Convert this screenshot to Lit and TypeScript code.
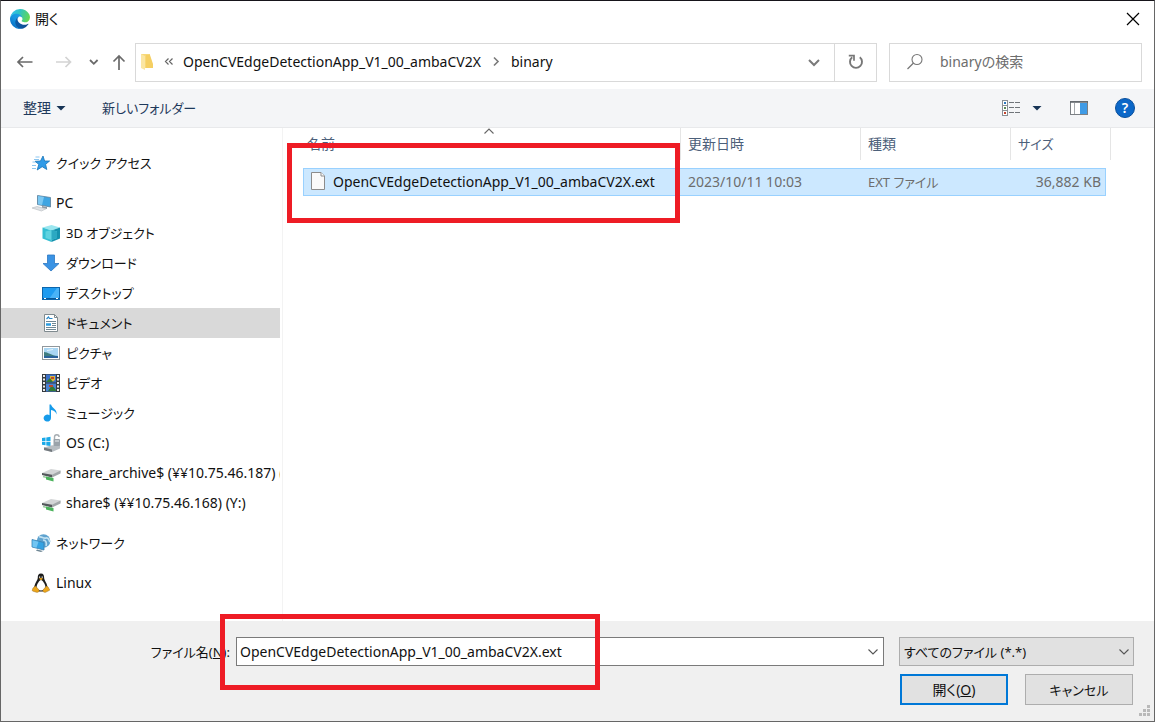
import { LitElement, html, css, svg, nothing } from "lit";
import { customElement, property } from "lit/decorators.js";

type NavItem = { icon: string; label: string; ja?: boolean; child?: boolean; selected?: boolean };

const groups: NavItem[][] = [
  [{ icon: "star", label: "クイック アクセス", ja: true }],
  [
    { icon: "pc", label: "PC" },
    { icon: "cube", label: "3D オブジェクト", ja: true, child: true },
    { icon: "download", label: "ダウンロード", ja: true, child: true },
    { icon: "desktop", label: "デスクトップ", ja: true, child: true },
    { icon: "document", label: "ドキュメント", ja: true, child: true, selected: true },
    { icon: "picture", label: "ピクチャ", ja: true, child: true },
    { icon: "video", label: "ビデオ", ja: true, child: true },
    { icon: "music", label: "ミュージック", ja: true, child: true },
    { icon: "disk", label: "OS (C:)", child: true },
    { icon: "share", label: "share_archive$ (¥¥10.75.46.187) (", child: true },
    { icon: "share", label: "share$ (¥¥10.75.46.168) (Y:)", child: true },
  ],
  [{ icon: "network", label: "ネットワーク", ja: true }],
  [{ icon: "linux", label: "Linux" }],
];

const glyphs: Record<string, unknown> = {
  star: svg`
    <path d="M12 3l1.600 5h5l-4 3.300 1.200 5.200-4.600-2.800-5 3.300 1.600-5.700L4 8.300l5.500-.3z" fill="#2f9be8" stroke="#1673b8" stroke-width=".8"/>
    <path d="M3 6.500h5M1.500 9h3M1 12.500h4M1 15.500h4M4.500 4h4" stroke="#7fc0ee" stroke-width=".9"/>`,
  pc: svg`
    <path d="M6.500 2.500l13 2v9.500l-13-2.500z" fill="#3fa5e2" stroke="#5b7f9a" stroke-width=".8"/>
    <path d="M7 3.100l6 1-2 8-4-.8z" fill="#7cc8f2"/>
    <path d="M11 13l5 1v2l-5-1z" fill="#8d99a3"/>
    <path d="M1 15l5-1.500 9 2.300-4.500 2.200z" fill="#dfe2e5" stroke="#b4b9be" stroke-width=".6"/>`,
  cube: svg`
    <path d="M1.500 4.500l9-2.500 8.500 2.500-8.500 3z" fill="#9be6ef"/>
    <path d="M1.500 4.500l9 3V19l-9-3.500z" fill="#35bfd3"/>
    <path d="M19 4.500l-8.500 3V19l8.500-3.500z" fill="#1592ae"/>
    <path d="M4.500 8.500l6-1.500 5.500 1.500v6.500L10.500 17l-6-2z" fill="#5fd3e0"/>
    <path d="M10.500 7l5.500 1.500v6.500L10.500 17z" fill="#2ba9c2"/>`,
  download: svg`<path d="M6.500 2h7v8.500H18L10 18 2 10.500h4.500z" fill="#3a93e4" stroke="#2c77c2" stroke-width=".8"/>`,
  desktop: svg`
    <rect x="1.500" y="4.500" width="17" height="12" fill="#1e9bf0" stroke="#0c66ad"/>
    <path d="M8 16L16 5h2v11z" fill="#4ab3f7"/><path d="M2 15.500h16" stroke="#0c5796"/>
    <path d="M3 15.500h2M15 15.500h2" stroke="#fff"/>`,
  document: svg`
    <path d="M3.500 1.500h10l3 3v14h-13z" fill="#fff" stroke="#7f8a8f"/>
    <path d="M13.500 1.500v3h3" fill="none" stroke="#7f8a8f"/>
    <path d="M5.500 6l2-2 1 1.500h3" fill="none" stroke="#2b8acb" stroke-width="1.200"/>
    <path d="M5 8.500h10M11 10.500h4M11 12.500h4M5 14.500h10M5 16.500h10" stroke="#6f8794"/>
    <path d="M5 11.500h5" stroke="#2b9ce0" stroke-width="2.500"/>`,
  picture: svg`
    <rect x="1.500" y="3.500" width="17" height="13" fill="#fff" stroke="#90979c"/>
    <rect x="3" y="5" width="14" height="10" fill="#a9d6f3"/>
    <path d="M3 9c4 0 7 3.500 14 4v2H3z" fill="#3f7d80"/><path d="M3 13l14 0v2H3z" fill="#2a639c"/>
    <path d="M6 7.500l6-1" stroke="#e6f4fc"/>`,
  video: svg`
    <rect x="1" y="1" width="18" height="18" fill="#353b3f"/>
    <rect x="5" y="1.500" width="10" height="8" fill="#3a70c8"/><rect x="5" y="10.500" width="10" height="8" fill="#4a83d4"/>
    <path d="M9 3h5v4l-3 2-2-2z" fill="#d9b53a"/><path d="M5 9l4-4 3 4zM7 18l4-6 4 5v1z" fill="#317a38"/>
    <path d="M10 5h3M8 13h4" stroke="#bd4a2a" stroke-width="2"/>
    <path d="M3 2v17M17 2v17" stroke="#fff" stroke-width="1.800" stroke-dasharray="2 1.500"/>`,
  music: svg`
    <path d="M8.500 1.500h1.500c1 4 6.500 4.500 5.500 10-.5-2.500-2.500-4-5.500-4.500V15a3.700 3.500 0 1 1-1.500-2.700z" fill="#169bea"/>`,
  disk: svg`
    <path d="M1 5l3.500-.5v3.500H1zM5.300 4.400L9.500 3.800v4.200H5.300zM1 8.800h3.500v3.500L1 11.800zM5.300 8.800h4.200v4.200l-4.200-.6z" fill="#1ba9e8"/>
    <path d="M3 14.500l7-2 9-1v4l-8 3.500-8-2z" fill="#b7bdc2"/><path d="M3 14.500l8 2V19l-8-2z" fill="#73797e"/>
    <path d="M13.500 7V4a2.300 2.300 0 0 1 4.600 0" fill="none" stroke="#a7adb2" stroke-width="1.400"/>
    <rect x="12.500" y="6" width="6.500" height="7" rx="1" fill="#9aa3aa"/><path d="M14 8h4" stroke="#e8ecef"/>`,
  share: svg`
    <path d="M1 10l9-4 9.500 1.500v2L11 13.500 1 12z" fill="#d3d5d6"/>
    <path d="M1 10l10 1.800v2.700L1 12z" fill="#54595c"/><path d="M11 11.800l8.500-4.300v3L11 14.500z" fill="#a2a7a9"/>
    <path d="M2 13.500l9 2.500" stroke="#9bc9a1" stroke-width="1.500"/>
    <path d="M5 13.500l7.500 1.500v3.500L5 16.500z" fill="#4bb35c"/>`,
  network: svg`
    <circle cx="12.500" cy="8" r="6.800" fill="#5fa3cf"/>
    <path d="M8 4c3-1 4 2 7 1s3 3 4 4M12 7c3 0 4 3 3 6" fill="none" stroke="#c3e2f2" stroke-width="1.600"/>
    <path d="M1 6.500l12 3v7.500l-12-3z" fill="#35a2e2" stroke="#3b7fae" stroke-width=".8"/>
    <path d="M1.500 7.200l6 1.500-2 6-4-1z" fill="#72c5f2"/>
    <path d="M6 16.500l6 1.500-2 1-5-1.200z" fill="#6f8795"/>`,
  linux: svg`
    <path d="M10 .5c-2.500 0-3.300 1.800-3.200 4 .1 2.700-3.500 6-3.500 10 0 2.500 3 4 6.700 4s6.500-1.500 6.500-4c0-4-3.400-7-3.400-10 0-2.200-.6-4-3.100-4z" fill="#1c1c1c"/>
    <path d="M10 7c-1.500 0-4.500 4.500-4.500 7.500 0 2 2.500 3 4.500 3s4.500-1 4.500-3C14.500 11.500 11.500 7 10 7z" fill="#fff"/>
    <path d="M8.600 3.500v1.200M11.200 3.500v1.200" stroke="#fff" stroke-width="1.200"/>
    <path d="M8 5.800l2-1 2 1-2 1.400z" fill="#eda61b"/>
    <path d="M4.500 13l3.500 4c.5 2-1 2.500-2.500 2.300L1.500 18c-.5-1 .2-2 .5-3zM15.500 13L12 17c-.5 2 1 2.500 2.500 2.300l4-2c.5-1-.8-1.500-1.200-3z" fill="#eda61b" stroke="#9b6b12" stroke-width=".5"/>`,
  edge: svg`
    <defs>
      <linearGradient id="ea" x1="0.300" x2="1" y1="0.700" y2="0.700"><stop offset="0" stop-color="#0c59a4"/><stop offset="1" stop-color="#114a8b"/></linearGradient>
      <linearGradient id="eb" x1="0.800" x2="0.200" y1="0.200" y2="1"><stop offset="0" stop-color="#1b9de2"/><stop offset=".4" stop-color="#1595df"/><stop offset="1" stop-color="#0668bf"/></linearGradient>
      <linearGradient id="ec" x1="0" x2="1" y1="0.300" y2="0.600"><stop offset="0" stop-color="#35c1f1"/><stop offset=".4" stop-color="#2cc3c6"/><stop offset="1" stop-color="#66d94f"/></linearGradient>
    </defs>
    <g transform="translate(-.36 -.38) scale(.078)">
      <path fill="url(#ea)" d="M235.680,195.460a93.730,93.730,0,0,1-10.540,4.710,101.870,101.870,0,0,1-35.900,6.460c-47.320,0-88.540-32.550-88.540-74.320A31.480,31.480,0,0,1,117.130,105c-42.800,1.800-53.800,46.400-53.800,72.530,0,73.880,68.090,81.370,82.760,81.370,7.910,0,19.840-2.300,27-4.560l1.310-.44A128.340,128.340,0,0,0,241,201.100,4,4,0,0,0,235.680,195.460Z"/>
      <path fill="url(#eb)" d="M110.340,246.340A79.200,79.200,0,0,1,87.600,225,80.720,80.720,0,0,1,117.130,105c3.120-1.470,8.450-4.130,15.540-4a32.350,32.350,0,0,1,25.690,13,31.880,31.880,0,0,1,6.360,18.660c0-.21,24.460-79.600-80-79.600-43.900,0-80,41.660-80,78.210a130.150,130.150,0,0,0,12.110,56,128,128,0,0,0,156.380,67.110,75.550,75.550,0,0,1-62.780-8Z"/>
      <path fill="url(#ec)" d="M156.940,153.780c-.81,1.050-3.300,2.500-3.300,5.660,0,2.610,1.700,5.120,4.720,7.230,14.380,10,41.490,8.680,41.560,8.680a59.560,59.560,0,0,0,30.270-8.350A61.380,61.380,0,0,0,260.630,114c.26-22.410-8-37.310-11.340-43.910C228.090,28.760,182.350,4.920,132.610,4.920a128,128,0,0,0-128,126.200c.48-36.540,36.800-66.050,80-66.050,3.500,0,23.460.34,42,10.070,16.340,8.580,24.900,18.940,30.850,29.210,6.180,10.670,7.280,24.150,7.280,29.520S162.050,147.200,156.940,153.780Z"/>
    </g>`,
  close: svg`<path d="M4 4l12 12M16 4L4 16" stroke="#000" stroke-width="1.200"/>`,
  back: svg`<path d="M17.500 10H3M8 5l-5 5 5 5" fill="none" stroke="#6a6a6a" stroke-width="1.700"/>`,
  forward: svg`<path d="M2 10H16.500M11.500 5l5 5-5 5" fill="none" stroke="#d3d3d3" stroke-width="1.700"/>`,
  up: svg`<path d="M10 18V4M4.500 9.500L10 4 15.500 9.500" fill="none" stroke="#6a6a6a" stroke-width="1.700"/>`,
  down: svg`<path d="M6 8l3.800 3.800L13.600 8" fill="none" stroke="#6a6a6a" stroke-width="1.800"/>`,
  downWide: svg`<path d="M5 8l5 5 5-5" fill="none" stroke="#7a7a7a" stroke-width="2"/>`,
  downThin: svg`<path d="M5.500 7.500L10 12l4.500-4.500" fill="none" stroke="#555" stroke-width="1.100"/>`,
  sort: svg`<path d="M5.500 12.500L10 8l4.500 4.500" fill="none" stroke="#666" stroke-width="1.100"/>`,
  right: svg`<path d="M8 5.500l4 4-4 4" fill="none" stroke="#7a7a7a" stroke-width="1.600"/>`,
  more: svg`<path d="M9.500 6.500L6.500 9.500l3 3M13.500 6.500L10.500 9.500l3 3" fill="none" stroke="#666" stroke-width="1.200"/>`,
  caret: svg`<path d="M5.500 8h9L10 12.500z" fill="#173456"/>`,
  folder: svg`
    <path d="M5 2h9v14H5z" fill="#f7d878"/><path d="M5 2l4 2v14l-4-2z" fill="#fbe6a2"/>
    <path d="M10 3h4l3 9v4h-7z" fill="#f5cf63"/>`,
  refresh: svg`<path d="M6.200 5.200a6 6 0 1 0 7.600 0" fill="none" stroke="#777" stroke-width="1.900"/><path d="M2.800 3.700h5.200v5" fill="none" stroke="#777" stroke-width="1.700"/>`,
  search: svg`<circle cx="12" cy="7.500" r="5" fill="none" stroke="#777" stroke-width="1.100"/><path d="M8.500 11L2.500 17" stroke="#777" stroke-width="1.200"/>`,
  view: svg`
    <rect x=".5" y="2.500" width="5" height="15" fill="#fff" stroke="#8a8f94"/>
    <path d="M1 7.500h4M1 12.500h4" stroke="#8a8f94"/>
    <rect x="2" y="4" width="2" height="2" fill="#2d77bd"/><rect x="2" y="9" width="2" height="2" fill="#5c8a55"/><rect x="2" y="14" width="2" height="2" fill="#c4452f"/>
    <path d="M7 4.500h11M7 9.500h11M7 14.500h11" stroke="#70757a" stroke-dasharray="5 1"/>`,
  pane: svg`
    <rect x="1.500" y="3.500" width="17" height="13" fill="#fff" stroke="#7c8084"/>
    <path d="M1 4h18" stroke="#5e6368" stroke-width="1.500"/><path d="M5.500 5v11" stroke="#a5a9ad"/>
    <rect x="11" y="5" width="7" height="11" fill="#3f9be6"/>`,
  file: svg`<path d="M2.500 .5h9.500l3.500 3.500v13.500h-13z" fill="#fafafa" stroke="#8c8c8c"/><path d="M12 .5V4h3.500" fill="#fff" stroke="#8c8c8c"/>`,
  grip: svg`<path d="M13 4h3v3h-3zM9 8h3v3H9zM13 8h3v3h-3zM5 12h3v3H5zM9 12h3v3H9zM13 12h3v3h-3z" fill="#b9b9b9"/>`,
};

@customElement("ui-icon")
class UiIcon extends LitElement {
  @property() name = "";

  static styles = css`
    :host { display: block; flex: none; width: 20px; height: 20px; }
    svg { display: block; }
  `;

  render() {
    return html`<svg width="20" height="20" viewBox="0 0 20 20" aria-hidden="true">${glyphs[this.name] ?? nothing}</svg>`;
  }
}

@customElement("app-root")
class AppRoot extends LitElement {
  static styles = css`
    :host {
      display: block;
      font-family: "Noto Sans", "Noto Sans CJK JP", sans-serif;
      font-size: 14px;
      line-height: 20px;
      font-feature-settings: "palt";
      color: #111;
    }
    *, *::before, *::after { box-sizing: border-box; }
    button, input, select { font: inherit; font-feature-settings: inherit; color: inherit; margin: 0; border-radius: 0; }
    button { padding: 0; border: 0; background: none; }
    .kana { font-size: 13px; }
    .dialog {
      display: flex; flex-direction: column; min-height: 100vh; background: #fff;
      border: 1px solid #666; border-top-color: #16141a;
    }
    .title { display: flex; align-items: center; gap: 5px; height: 36px; padding: 0 11px 0 9px; }
    .title h1 { flex: 1; margin: 0; font-size: 14px; font-weight: 400; }
    .navigation { display: flex; align-items: center; height: 52px; padding: 0 12px 2px 14px; }
    .arrows { display: flex; align-items: center; width: 120px; }
    .arrows button:nth-child(1) { margin-right: 19px; }
    .arrows button:nth-child(2) { margin-right: 10px; }
    .arrows button:nth-child(3) { margin-right: 5px; }
    .address { flex: 1; display: flex; align-items: center; height: 39px; border: 1px solid #d9d9d9; }
    .crumbs { flex: 1; display: flex; align-items: center; }
    .crumbs a { color: inherit; text-decoration: none; }
    .crumbs .more { margin: 0 4px 0 3px; }
    .crumbs ui-icon.sep { margin: 0 5px; }
    .address .drop { margin-right: 10px; }
    .address .reload { display: grid; place-items: center; width: 42px; height: 37px; border-left: 1px solid #d9d9d9; }
    .search {
      display: flex; align-items: center; gap: 15px; width: 253px; height: 39px; margin-left: 12px;
      padding: 0 15px; border: 1px solid #d9d9d9;
    }
    .search input { flex: 1; min-width: 0; padding: 0; border: 0; outline: 0; background: none; }
    .search input::placeholder { color: #6d6d6d; opacity: 1; }
    .toolbar {
      display: flex; align-items: center; height: 39px; padding: 0 19px 0 22px;
      background: #f4f5f7; border-bottom: 1px solid #e8e9eb; color: #1e395b;
    }
    .toolbar button { display: flex; align-items: center; }
    .toolbar .new { margin-left: 31px; }
    .tools { display: flex; align-items: center; margin-left: auto; }
    .tools .pane { margin: 0 26px 0 22px; }
    .tools .caret { margin-left: 5px; }
    .tools .help {
      justify-content: center; width: 20px; height: 20px; border-radius: 50%;
      background: #0b67c8; border: 1px solid #0a4f9c; color: #fff; font-weight: 600;
    }
    .body { flex: 1; display: flex; }
    .sidebar { flex: none; width: 279px; padding: 20px 0 13px; overflow: hidden; }
    .sidebar ul { list-style: none; margin: 0 0 10px; padding: 0; }
    .sidebar a {
      display: flex; align-items: center; gap: 5px; height: 30px; padding-left: 30px;
      color: inherit; text-decoration: none; white-space: nowrap;
    }
    .sidebar a.child { padding-left: 40px; }
    .sidebar a.selected { background: #d9d9d9; }
    .files { position: relative; flex: 1; margin-left: 2px; padding-left: 20px; border-left: 1px solid #f3f3f3; }
    table { width: 808px; table-layout: fixed; border-collapse: separate; border-spacing: 0; text-align: left; }
    .c-name { width: 378px; }
    .c-date { width: 180px; }
    .c-type { width: 150px; }
    .c-size { width: 95px; }
    .c-end { width: 5px; }
    th { height: 40px; padding: 0 0 8px; font-weight: 400; color: #4c607a; }
    th > div { display: flex; align-items: center; height: 32px; padding-left: 7px; border-right: 1px solid #e5e5e5; }
    th:first-child > div { padding-left: 4px; }
    td { height: 28px; padding: 0 0 0 7px; background: #cce8ff; border: solid #99d1ff; border-width: 1px 0; color: #6d6d6d; white-space: nowrap; }
    td:first-child { border-left-width: 1px; padding-left: 5px; color: #111; }
    td.size { border-right-width: 1px; padding-right: 4px; text-align: right; }
    td.end { padding: 0; background: none; border: 0; }
    .file { display: flex; align-items: center; gap: 4px; }
    .sort { position: absolute; left: 196px; top: -7px; }
    .mark { position: absolute; border: 5px solid #ee1c25; pointer-events: none; }
    .files .mark { left: 4px; top: 15px; width: 393px; height: 80px; }
    .footer { position: relative; padding: 16px 20px 16px 0; background: #f0f0f0; }
    .footer .mark { left: 219px; top: -7px; width: 380px; height: 76px; }
    .fields { display: flex; align-items: center; }
    .fields label { width: 235px; padding-right: 6px; text-align: right; }
    .combo { flex: 1; display: flex; align-items: center; height: 29px; background: #fff; border: 1px solid #7a7a7a; }
    .combo input { flex: 1; min-width: 0; height: 27px; padding: 0 3px; border: 0; outline: 0; background: none; }
    .filter { display: grid; align-items: center; width: 235px; height: 29px; margin-left: 15px; }
    .filter select {
      grid-area: 1 / 1; height: 29px; padding: 0 4px; appearance: none;
      background: #e1e1e1; border: 1px solid #adadad;
    }
    .filter ui-icon { grid-area: 1 / 1; justify-self: end; pointer-events: none; }
    .actions { display: flex; justify-content: flex-end; gap: 17px; margin: 8px 1px 0 0; }
    .actions button { width: 108px; height: 31px; background: #e1e1e1; border: 1px solid #adadad; }
    .actions .primary { border: 2px solid #0078d7; }
    .grip { position: absolute; right: 0; bottom: 0; }
  `;

  private navItem(item: NavItem) {
    const cls = [item.ja ? "kana" : "", item.child ? "child" : "", item.selected ? "selected" : ""].join(" ");
    return html`<li><a href="#" class=${cls}><ui-icon name=${item.icon}></ui-icon><span>${item.label}</span></a></li>`;
  }

  render() {
    return html`
      <main class="dialog">
        <header class="title">
          <ui-icon name="edge"></ui-icon>
          <h1>開く</h1>
          <button aria-label="閉じる"><ui-icon name="close"></ui-icon></button>
        </header>
        <div class="navigation">
          <div class="arrows">
            <button aria-label="戻る"><ui-icon name="back"></ui-icon></button>
            <button aria-label="進む" disabled><ui-icon name="forward"></ui-icon></button>
            <button aria-label="最近表示した場所"><ui-icon name="down"></ui-icon></button>
            <button aria-label="上へ"><ui-icon name="up"></ui-icon></button>
          </div>
          <div class="address">
            <nav class="crumbs">
              <ui-icon name="folder"></ui-icon>
              <button class="more" aria-label="上位フォルダー"><ui-icon name="more"></ui-icon></button>
              <a href="#">OpenCVEdgeDetectionApp_V1_00_ambaCV2X</a>
              <ui-icon class="sep" name="right"></ui-icon>
              <a href="#">binary</a>
            </nav>
            <button class="drop" aria-label="以前の場所"><ui-icon name="downWide"></ui-icon></button>
            <button class="reload" aria-label="最新の情報に更新"><ui-icon name="refresh"></ui-icon></button>
          </div>
          <div class="search">
            <ui-icon name="search"></ui-icon>
            <input type="text" aria-label="検索" placeholder="binaryの検索" />
          </div>
        </div>
        <div class="toolbar">
          <button>整理<ui-icon name="caret"></ui-icon></button>
          <button class="kana new">新しいフォルダー</button>
          <div class="tools">
            <button aria-label="表示方法"><ui-icon name="view"></ui-icon></button>
            <button class="caret" aria-label="その他のオプション"><ui-icon name="caret"></ui-icon></button>
            <button class="pane" aria-label="プレビュー ウィンドウ"><ui-icon name="pane"></ui-icon></button>
            <button class="help" aria-label="ヘルプ">?</button>
          </div>
        </div>
        <div class="body">
          <nav class="sidebar">
            ${groups.map((g) => html`<ul>${g.map((i) => this.navItem(i))}</ul>`)}
          </nav>
          <section class="files">
            <table>
              <colgroup>
                <col class="c-name" /><col class="c-date" /><col class="c-type" /><col class="c-size" /><col class="c-end" />
              </colgroup>
              <thead>
                <tr>
                  <th><div>名前</div></th>
                  <th><div>更新日時</div></th>
                  <th><div>種類</div></th>
                  <th colspan="2"><div class="kana">サイズ</div></th>
                </tr>
              </thead>
              <tbody>
                <tr>
                  <td><div class="file"><ui-icon name="file"></ui-icon>OpenCVEdgeDetectionApp_V1_00_ambaCV2X.ext</div></td>
                  <td>2023/10/11 10:03</td>
                  <td class="kana">EXT ファイル</td>
                  <td class="size">36,882 KB</td>
                  <td class="end"></td>
                </tr>
              </tbody>
            </table>
            <ui-icon class="sort" name="sort"></ui-icon>
            <div class="mark"></div>
          </section>
        </div>
        <footer class="footer">
          <div class="fields">
            <label class="kana" for="filename">ファイル名(<u>N</u>):</label>
            <div class="combo">
              <input id="filename" type="text" .value=${"OpenCVEdgeDetectionApp_V1_00_ambaCV2X.ext"} />
              <button aria-label="ファイル名の一覧"><ui-icon name="downThin"></ui-icon></button>
            </div>
            <div class="filter">
              <select class="kana" aria-label="ファイルの種類"><option>すべてのファイル (*.*)</option></select>
              <ui-icon name="downThin"></ui-icon>
            </div>
          </div>
          <div class="actions">
            <button class="primary">開く(<u>O</u>)</button>
            <button class="kana">キャンセル</button>
          </div>
          <ui-icon class="grip" name="grip"></ui-icon>
          <div class="mark"></div>
        </footer>
      </main>
    `;
  }
}
